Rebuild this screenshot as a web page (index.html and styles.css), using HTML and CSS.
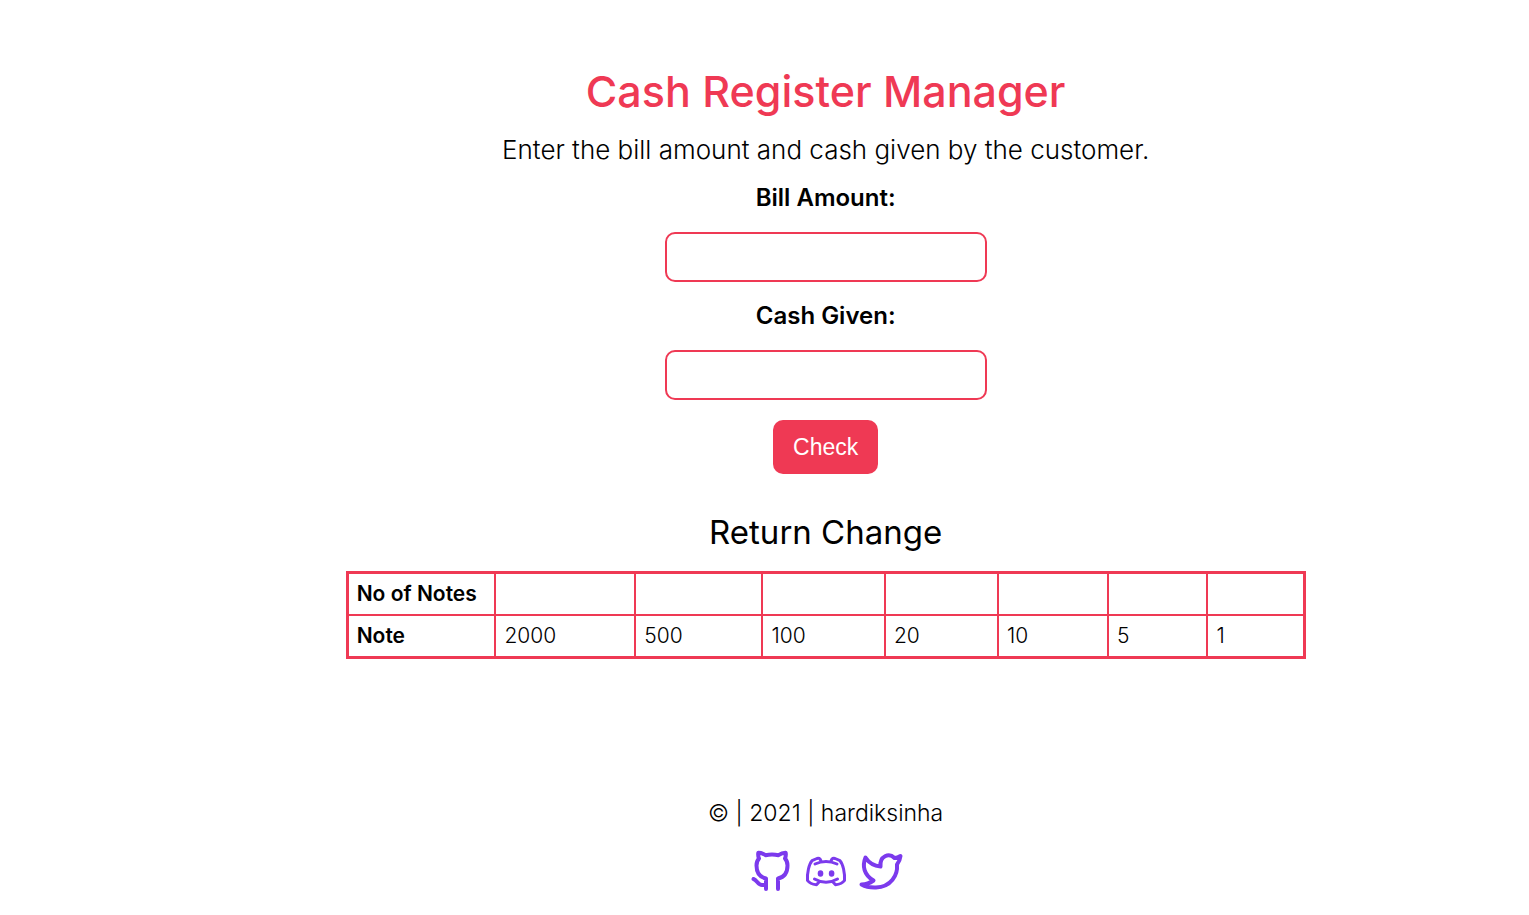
FILE: index.html
```
<!DOCTYPE html>
<html lang="en">
<head>
<meta charset="utf-8">
<meta name="viewport" content="width=device-width, initial-scale=1">
<title>Cash Register Manager</title>
<link rel="stylesheet" href="styles.css">
</head>
<body>
<main class="register">
  <h1 class="title">Cash Register Manager</h1>
  <p class="intro">Enter the bill amount and cash given by the customer.</p>
  <form class="form">
    <label class="label" for="bill">Bill Amount:</label>
    <input class="field" id="bill" type="text" inputmode="numeric">
    <label class="label" for="cash">Cash Given:</label>
    <input class="field" id="cash" type="text" inputmode="numeric">
    <button class="check" type="button">Check</button>
  </form>
  <table class="change">
    <caption class="caption">Return Change</caption>
    <colgroup><col class="c1"><col class="c2"><col class="c3"><col class="c4"><col class="c5"><col class="c6"><col class="c7"><col class="c8"></colgroup>
    <tbody>
      <tr><th scope="row">No of Notes</th><td></td><td></td><td></td><td></td><td></td><td></td><td></td></tr>
      <tr><th scope="row">Note</th><td>2000</td><td>500</td><td>100</td><td>20</td><td>10</td><td>5</td><td>1</td></tr>
    </tbody>
  </table>
</main>
<footer class="footer">
  <p class="copyright">© | 2021 | hardiksinha</p>
  <nav class="social" aria-label="Social links">
    <a href="#github" aria-label="GitHub"><svg class="icon" viewBox="0 0 48 48"><path class="line" d="M5.500 33C9 34 10 39 14 39H18M18 43V32.500C11 31 8.500 26.500 8.500 19.500C8.500 16.500 9.200 14.300 11 12.500C10 10 10 8.500 10.300 6.800C13 6.700 15 7.500 17.500 9.200Q24 7.800 30.500 9.200C33 7.500 35 6.700 37.700 6.800C38 8.500 38 10 37 12.500C38.800 14.300 39.500 16.500 39.500 19.500C39.500 26.500 37 31 30 32.500V43"/></svg></a>
    <a href="#discord" aria-label="Discord"><svg class="icon" viewBox="0 0 48 48"><path class="line thin" d="M13 18Q24 13 35 18M12.500 33Q24 39.500 35.500 33M19 15L18 13Q17 12 15 12.500L10 14.700C7 18 5 27 5.500 34.500Q8 38 14.500 38.800L17.500 35.500M29 15L30 13Q31 12 33 12.500L38 14.700C41 18 43 27 42.500 34.500Q40 38 33.500 38.800L30.500 35.500"/><ellipse class="eye" cx="18.500" cy="27.500" rx="2.800" ry="3.200"/><ellipse class="eye" cx="29.600" cy="27.500" rx="2.800" ry="3.200"/></svg></a>
    <a href="#twitter" aria-label="Twitter"><svg class="icon" viewBox="0 0 48 48"><path class="line" d="M9.500 11.500C13 17 18 20 24.500 20.500C23.500 10 33 6.500 38.500 12C41 12 43 11 44.500 10C44 14 43 16 41 18.500C42 29 35 41 20 41.500C15 41.700 9 40.500 5.500 38.500C10 38.500 14 37 17.500 34.500C8 29 6 20 9.500 11.500Z"/></svg></a>
  </nav>
</footer>
</body>
</html>
```
FILE: styles.css
```
* { box-sizing: border-box; }
body {
  margin: 0;
  padding: 64px 0 0 8%;
  background: #fff;
  color: #000;
  font-family: Inter, "Open Sans", sans-serif;
  font-weight: 300;
}
.register, .form, .footer { display: flex; flex-direction: column; align-items: center; }
.title { margin: 0; color: #ef3954; font-size: 43px; line-height: 54px; font-weight: 500; }
.intro { margin: 16px 0; font-size: 26px; line-height: 32px; }
.form { width: 100%; }
.label { font-size: 24px; line-height: 32px; font-weight: 600; }
.field {
  width: 322px;
  max-width: 100%;
  height: 50px;
  margin: 18px 0;
  padding: 8px 16px;
  border: 2px solid #ef3954;
  border-radius: 10px;
  font: inherit;
  font-size: 24px;
}
.check {
  margin-top: 2px;
  padding: 12px 20px;
  border: 0;
  border-radius: 10px;
  background: #ef3954;
  color: #fff;
  font: 23px/30px "Liberation Sans", Arial, sans-serif;
}
.change {
  width: 100%;
  max-width: 960px;
  margin-top: 38px;
  border: 3px solid #ef3954;
  border-collapse: collapse;
  table-layout: fixed;
  text-align: left;
  font-size: 21px;
  line-height: 24px;
}
.caption { padding-bottom: 19px; font-size: 33px; line-height: 40px; font-weight: 400; }
.change th, .change td { height: 42px; padding: 8px; border: 2px solid #ef3954; }
.change th { font-weight: 600; }
.c1 { width: 15.5%; }
.c2 { width: 14.6%; }
.c3 { width: 13.3%; }
.c4 { width: 12.8%; }
.c5 { width: 11.8%; }
.c6 { width: 11.5%; }
.c7 { width: 10.4%; }
.footer { margin-top: 138px; }
.copyright { margin: 0; font-size: 23px; line-height: 32px; }
.social { display: flex; gap: 6px; margin-top: 17px; }
.icon { display: block; width: 48px; height: 48px; }
.line { fill: none; stroke: #7c3aed; stroke-width: 4; stroke-linecap: round; stroke-linejoin: round; }
.thin { stroke-width: 3; }
.eye { fill: #7c3aed; }
```
